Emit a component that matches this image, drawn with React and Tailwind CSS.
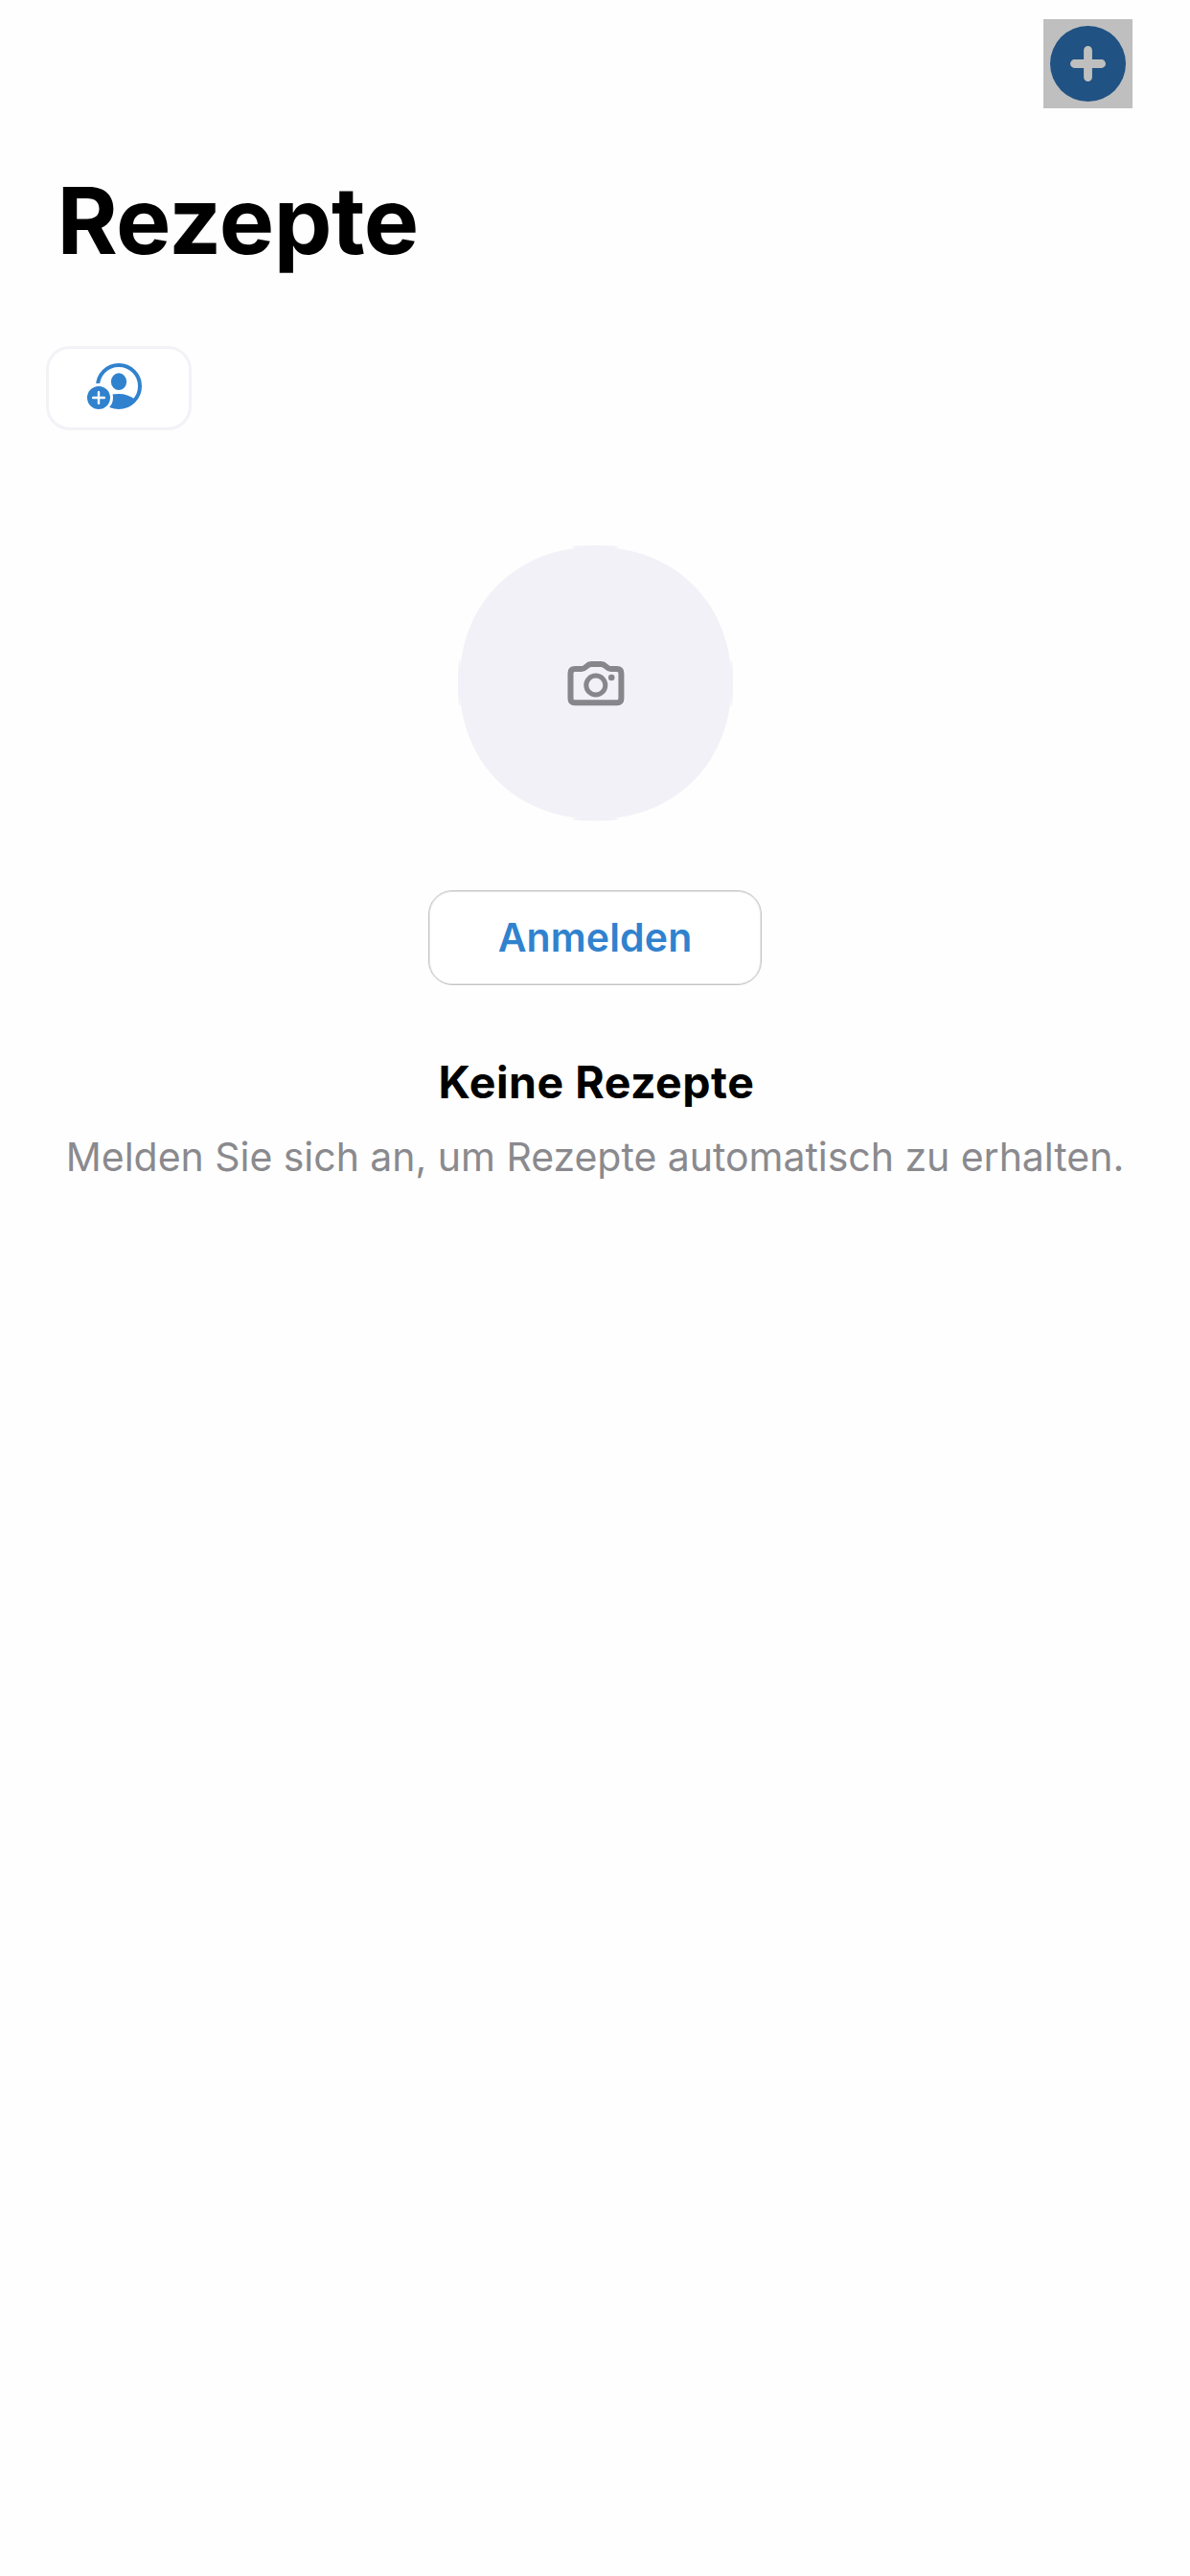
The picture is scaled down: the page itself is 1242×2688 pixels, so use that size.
const AddPersonIcon = () => (
  <svg width="58" height="50" viewBox="0 0 58 50" fill="none">
    <circle cx="33" cy="25" r="22" stroke="#3182ce" strokeWidth="4" />
    <ellipse cx="33" cy="20.2" rx="8.1" ry="8.9" fill="#3182ce" />
    <path d="M16 36C21 34 27 33 33 33C39 33 45 35 49.500 38.500A24 24 0 0 1 24 47Z" fill="#3182ce" />
    <circle cx="12" cy="37" r="15" fill="#fff" />
    <circle cx="12" cy="37" r="12" fill="#3182ce" />
    <path d="M12 31.100v11.800M6.100 37h11.800" stroke="#fff" strokeWidth="2.400" strokeLinecap="round" />
  </svg>
);

const CameraBadge = () => (
  <svg width="287" height="288" viewBox="-143.500 -143.750 287 288" fill="none">
    <g fill="#f2f1f7">
      <path d="M0 -142C83 -142 142 -83 142 0C142 83 83 142 0 142C-83 142 -142 83 -142 0C-142 -83 -83 -142 0 -142Z" />
      <ellipse cx="0" cy="-142" rx="24" ry="1.700" />
      <ellipse cx="0" cy="142" rx="24" ry="1.700" />
      <ellipse cx="-142" cy="0" rx="1.500" ry="24" />
      <ellipse cx="142" cy="0" rx="1.500" ry="24" />
    </g>
    <g transform="translate(-31 -24.250)" stroke="#87868b">
      <path
        d="M9 9.500H16.500C19 9.500 20 8.500 21.500 7C23 5.500 24 4.500 26.500 4.500H37C39.500 4.500 40.500 5.500 42 7C43.500 8.500 44.500 9.500 47 9.500H53.500Q57.900 9.500 57.900 14V40.300Q57.900 44.800 53.500 44.800H9.400Q5 44.800 5 40.300V14Q5 9.500 9.400 9.500Z"
        strokeWidth="6"
      />
      <circle cx="31.300" cy="26.500" r="10" strokeWidth="5" />
      <circle cx="47.700" cy="18.500" r="3.300" fill="#87868b" stroke="none" />
    </g>
  </svg>
);

export default function App() {
  return (
    <main className="flex h-[2688px] w-[1242px] flex-col overflow-hidden bg-[#fefefe] font-['Inter',sans-serif]">
      <header className="flex justify-end pt-5 pr-[60px]">
        <button className="flex size-[93px] items-center justify-center bg-[#bfbfbf]">
          <svg width="79" height="79" viewBox="0 0 79 79">
            <circle cx="39.500" cy="39.500" r="39.500" fill="#205283" />
            <path d="M39.500 25.400v28.200M25.400 39.500h28.200" stroke="#bfbfbf" strokeWidth="8.800" strokeLinecap="round" />
          </svg>
        </button>
      </header>
      <h1 className="mt-[57px] ml-[59.500px] h-[120px] text-[96.500px] leading-[120px] font-bold tracking-[-0.6px] whitespace-nowrap text-black">
        Rezepte
      </h1>
      <button className="mt-[71px] ml-12 flex h-[88px] w-[152px] items-start justify-start rounded-[25px] border-[3px] border-[#f2f2f7] bg-white pt-3.5 pl-10">
        <AddPersonIcon />
      </button>
      <section className="flex flex-col items-center">
        <div className="mt-[120px] h-[288px]">
          <CameraBadge />
        </div>
        <button className="mt-[72px] flex h-[99px] w-[348px] items-center justify-center rounded-[25px] border border-[#c4c4c6] bg-white text-[41px] font-semibold tracking-[0.12px] text-[#3182ce] shadow-[inset_0_0_0_1px_#e8e8e9]">
          Anmelden
        </button>
        <h2 className="mt-[71px] h-[60px] pl-[3px] text-[46.500px] leading-[60px] font-bold tracking-[0.5px] whitespace-nowrap text-black">
          Keine Rezepte
        </h2>
        <p className="mt-[21px] h-[54px] text-[41px] leading-[54px] tracking-[-0.03px] whitespace-nowrap text-[#8a8a8e]">
          Melden Sie sich an, um Rezepte automatisch zu erhalten.
        </p>
      </section>
    </main>
  );
}
